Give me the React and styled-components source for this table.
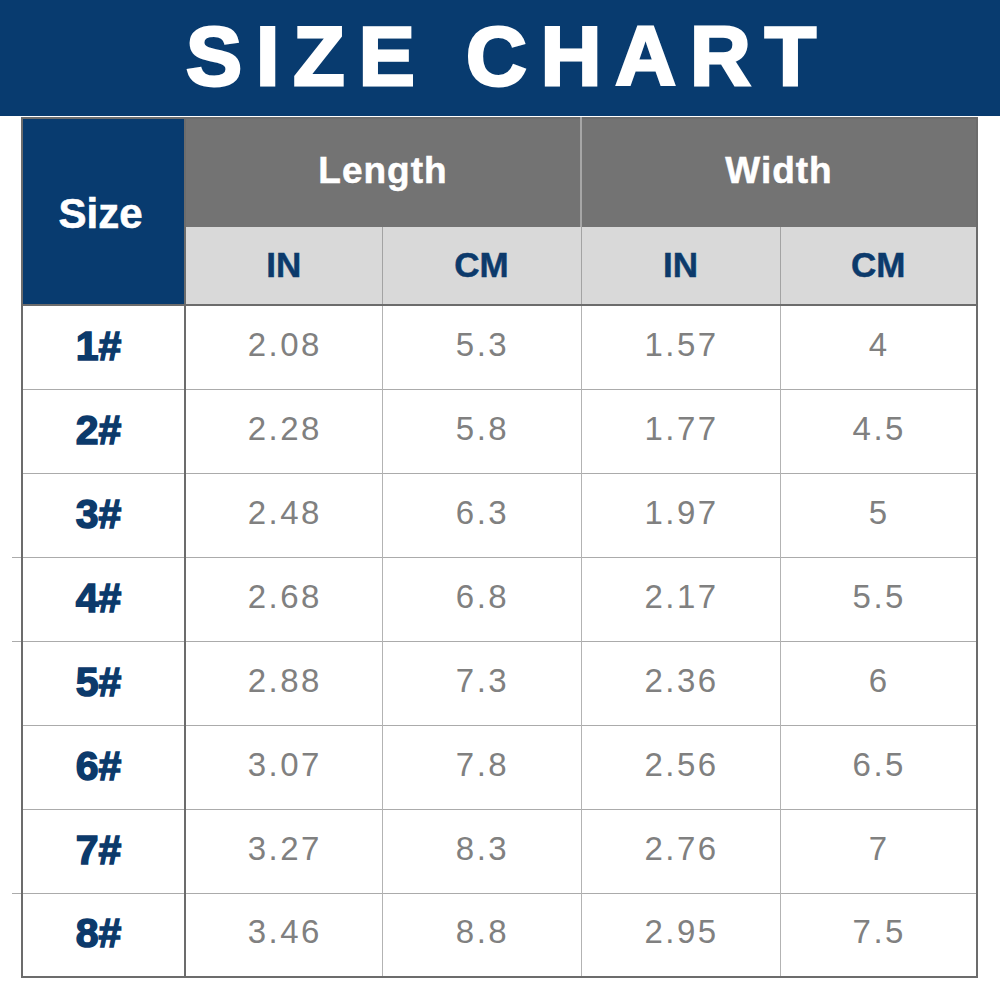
import React from 'react'
import styled, { createGlobalStyle } from 'styled-components'

const rows = [
    ['1#', '2.08', '5.3', '1.57', '4'],
    ['2#', '2.28', '5.8', '1.77', '4.5'],
    ['3#', '2.48', '6.3', '1.97', '5'],
    ['4#', '2.68', '6.8', '2.17', '5.5'],
    ['5#', '2.88', '7.3', '2.36', '6'],
    ['6#', '3.07', '7.8', '2.56', '6.5'],
    ['7#', '3.27', '8.3', '2.76', '7'],
    ['8#', '3.46', '8.8', '2.95', '7.5'],
]

// rows whose divider line runs a little past the left edge in the scan
const longLine = ['4#', '5#', '8#']

export default function App() {
    return (
        <>
            <GlobalStyle />
            <Page>
                <Banner>
                    <Title>SIZE CHART</Title>
                </Banner>
                <TableWrap>
                    <Chart>
                        <colgroup>
                            <col style={{ width: 163 }} />
                            <col style={{ width: 197 }} />
                            <col style={{ width: 199 }} />
                            <col style={{ width: 199 }} />
                            <col style={{ width: 197 }} />
                        </colgroup>
                        <thead>
                            <GroupRow>
                                <SizeHead rowSpan={2}>Size</SizeHead>
                                <GroupHead colSpan={2}>Length</GroupHead>
                                <GroupHead colSpan={2}>Width</GroupHead>
                            </GroupRow>
                            <UnitRow>
                                <UnitHead>IN</UnitHead>
                                <UnitHead>CM</UnitHead>
                                <UnitHead>IN</UnitHead>
                                <UnitHead>CM</UnitHead>
                            </UnitRow>
                        </thead>
                        <tbody>
                            {rows.map(([size, ...vals]) => (
                                <DataRow key={size}>
                                    <SizeCell $long={longLine.includes(size)}>{size}</SizeCell>
                                    {vals.map((v, i) => (
                                        <ValueCell key={i}>{v}</ValueCell>
                                    ))}
                                </DataRow>
                            ))}
                        </tbody>
                    </Chart>
                </TableWrap>
            </Page>
        </>
    )
}

const GlobalStyle = createGlobalStyle`
  html, body {
    margin: 0;
    padding: 0;
    background: #ffffff;
  }
`

const Page = styled.div`
    width: 1000px;
    height: 981px;
    overflow: hidden;
    font-family: "Liberation Sans", Arial, sans-serif;
`

const Banner = styled.div`
    height: 116px;
    background-color: #083b6f;
    display: flex;
    align-items: center;
    justify-content: center;
`

const Title = styled.h1`
    margin: 0 0 4px 16px;
    color: #ffffff;
    font-family: "Liberation Sans", Arial, sans-serif;
    font-weight: 700;
    font-size: 84px;
    letter-spacing: 14px;
    line-height: 1;
    -webkit-text-stroke: 3px #ffffff;
`

const TableWrap = styled.div`
    padding: 1px 0 0 21px;
`

const Chart = styled.table`
    width: 955px;
    table-layout: fixed;
    border-collapse: collapse;
    border: 2px solid #6c6c6c;
`

const GroupRow = styled.tr`
    height: 109px;
`

const UnitRow = styled.tr`
    height: 78px;
    border-bottom: 2px solid #6c6c6c;
`

const SizeHead = styled.th`
    background-color: #083b6f;
    color: #ffffff;
    font-size: 42px;
    font-weight: 700;
    -webkit-text-stroke: 0.6px #ffffff;
    border-right: 2px solid #6c6c6c;
    padding: 4px 6px 0 0;
`

const GroupHead = styled.th`
    background-color: #737373;
    color: #ffffff;
    font-size: 37px;
    font-weight: 700;
    -webkit-text-stroke: 0.5px #ffffff;
    border-left: 2px solid #a6a6a6;
    padding: 0 0 4px;
    letter-spacing: 1px;
`

const UnitHead = styled.th`
    background-color: #d9d9d9;
    color: #0c3a6b;
    font-size: 35px;
    font-weight: 700;
    -webkit-text-stroke: 0.5px #0c3a6b;
    border-left: 1px solid #a3a3a3;
    padding: 0 0 2px;
`

const DataRow = styled.tr`
    height: 84px;
    border-top: 1px solid #ababab;
`

const SizeCell = styled.td`
    position: relative;
    text-align: center;
    color: #0c3a6b;
    font-size: 41px;
    font-weight: 700;
    -webkit-text-stroke: 1.5px #0c3a6b;
    border-right: 2px solid #6c6c6c;
    padding: 0 10px 2px 0;

    &::before {
        content: '';
        display: ${props => props.$long ? 'block' : 'none'};
        position: absolute;
        left: -11px;
        top: -1px;
        width: 9px;
        height: 1px;
        background: #ababab;
    }
`

const ValueCell = styled.td`
    text-align: center;
    color: #808080;
    font-size: 33px;
    letter-spacing: 2.5px;
    border-left: 1px solid #b3b3b3;
    padding: 0 0 5px 2px;
`
